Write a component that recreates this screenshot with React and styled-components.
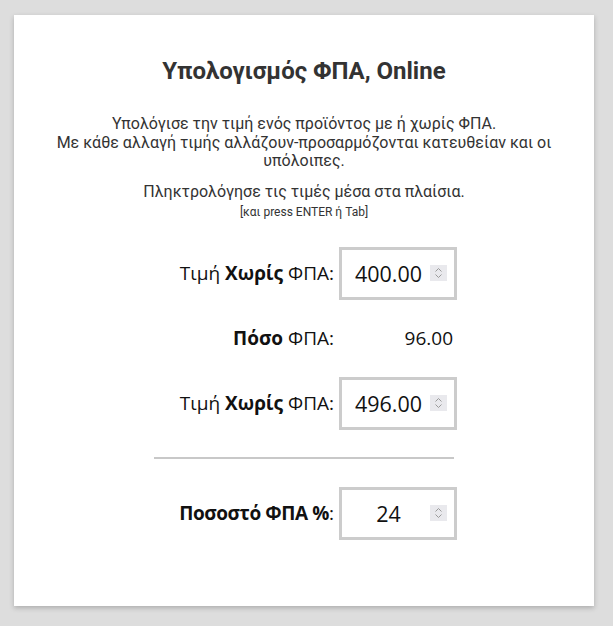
import { useState } from "react";
import styled, { createGlobalStyle } from "styled-components";

const GlobalStyle = createGlobalStyle`
  html, body {
    margin: 0;
    padding: 0;
    background: #dddddd;
  }
  body {
    padding: 15px 19px 20px 14px;
    font-family: Roboto, "Noto Sans", sans-serif;
    color: #333;
  }
`;

const Card = styled.div`
  width: 580px;
  box-sizing: border-box;
  background: #fff;
  box-shadow: 0 2px 5px rgba(0, 0, 0, 0.22);
  padding: 42px 36px 66px;
  display: flex;
  flex-direction: column;
  align-items: center;
`;

const Title = styled.h2`
  margin: 0 0 30px;
  font-family: Roboto, sans-serif;
  font-size: 24px;
  line-height: 28px;
  font-weight: 700;
  color: #333;
`;

const Intro = styled.p`
  margin: 0;
  font-size: 16px;
  line-height: 18.5px;
  text-align: center;
`;

const Hint = styled.p`
  margin: 12px 0 0;
  font-size: 16px;
  line-height: 18px;
  text-align: center;
`;

const Small = styled.div`
  margin: 2px 0 26px;
  font-size: 12px;
  line-height: 18px;
  text-align: center;
`;

const Form = styled.div`
  display: grid;
  grid-template-columns: 180px 118px;
  grid-template-rows: 53px 53px 53px 33px 53px;
  column-gap: 5px;
  row-gap: 12px;
  margin-left: 3px;
  font-family: "Open Sans", "Noto Sans", sans-serif;
  color: #111;
`;

const Label = styled.label`
  display: flex;
  align-items: center;
  justify-content: flex-end;
  font-size: 19px;
  white-space: nowrap;
`;

const Strong = styled.b`
  font-weight: 700;
  letter-spacing: ${(props) => (props.tight ? "-0.4px" : "0")};
`;

const Value = styled.div`
  display: flex;
  align-items: center;
  justify-content: flex-end;
  padding-right: 4px;
  font-size: 19px;
`;

const Divider = styled.div`
  grid-column: 1 / -1;
  align-self: center;
  height: 2px;
  background: #c8c8c8;
  margin-right: 3px;
`;

const Box = styled.div`
  display: flex;
  align-items: center;
  border: 3px solid #cccccc;
  background: #fff;
  padding-right: 7px;
`;

const NumberInput = styled.input`
  flex: 1;
  min-width: 0;
  border: 0;
  outline: none;
  padding: 0 0 0 5px;
  background: transparent;
  font-family: "Open Sans", "Noto Sans", sans-serif;
  font-size: 21.5px;
  color: #111;
  text-align: center;
  -moz-appearance: textfield;
  &::-webkit-inner-spin-button,
  &::-webkit-outer-spin-button {
    -webkit-appearance: none;
    margin: 0;
  }
`;

const Spinner = styled.span`
  width: 17px;
  height: 16px;
  background: #e9e9ed;
  display: flex;
  align-items: center;
  justify-content: center;
`;

function Spin() {
  return (
    <Spinner>
      <svg width="9" height="12" viewBox="0 0 9 12" fill="none" stroke="#9a9a9a" strokeWidth="1">
        <path d="M1.5 4.5 L4.5 1.5 L7.5 4.5" />
        <path d="M1.5 7.5 L4.5 10.5 L7.5 7.5" />
      </svg>
    </Spinner>
  );
}

function Field({ value, onChange }) {
  return (
    <Box>
      <NumberInput type="number" value={value} onChange={(e) => onChange(e.target.value)} />
      <Spin />
    </Box>
  );
}

export default function App() {
  const [net, setNet] = useState("400.00");
  const [rate, setRate] = useState("24");
  const n = parseFloat(net) || 0;
  const r = parseFloat(rate) || 0;
  const vat = ((n * r) / 100).toFixed(2);
  const gross = (n + (n * r) / 100).toFixed(2);

  return (
    <>
      <GlobalStyle />
      <Card>
        <Title>Υπολογισμός ΦΠΑ, Online</Title>
        <Intro>
          Υπολόγισε την τιμή ενός προϊόντος με ή χωρίς ΦΠΑ.
          <br />
          Με κάθε αλλαγή τιμής αλλάζουν-προσαρμόζονται κατευθείαν και οι υπόλοιπες.
        </Intro>
        <Hint>Πληκτρολόγησε τις τιμές μέσα στα πλαίσια.</Hint>
        <Small>[και press ENTER ή Tab]</Small>
        <Form>
          <Label>
            Τιμή&nbsp;<Strong>Χωρίς</Strong>&nbsp;ΦΠΑ:
          </Label>
          <Field value={net} onChange={setNet} />
          <Label>
            <Strong>Πόσο</Strong>&nbsp;ΦΠΑ:
          </Label>
          <Value>{vat}</Value>
          <Label>
            Τιμή&nbsp;<Strong>Χωρίς</Strong>&nbsp;ΦΠΑ:
          </Label>
          <Field value={gross} onChange={() => {}} />
          <Divider />
          <Label>
            <Strong tight>Ποσοστό ΦΠΑ %</Strong>:
          </Label>
          <Field value={rate} onChange={setRate} />
        </Form>
      </Card>
    </>
  );
}
